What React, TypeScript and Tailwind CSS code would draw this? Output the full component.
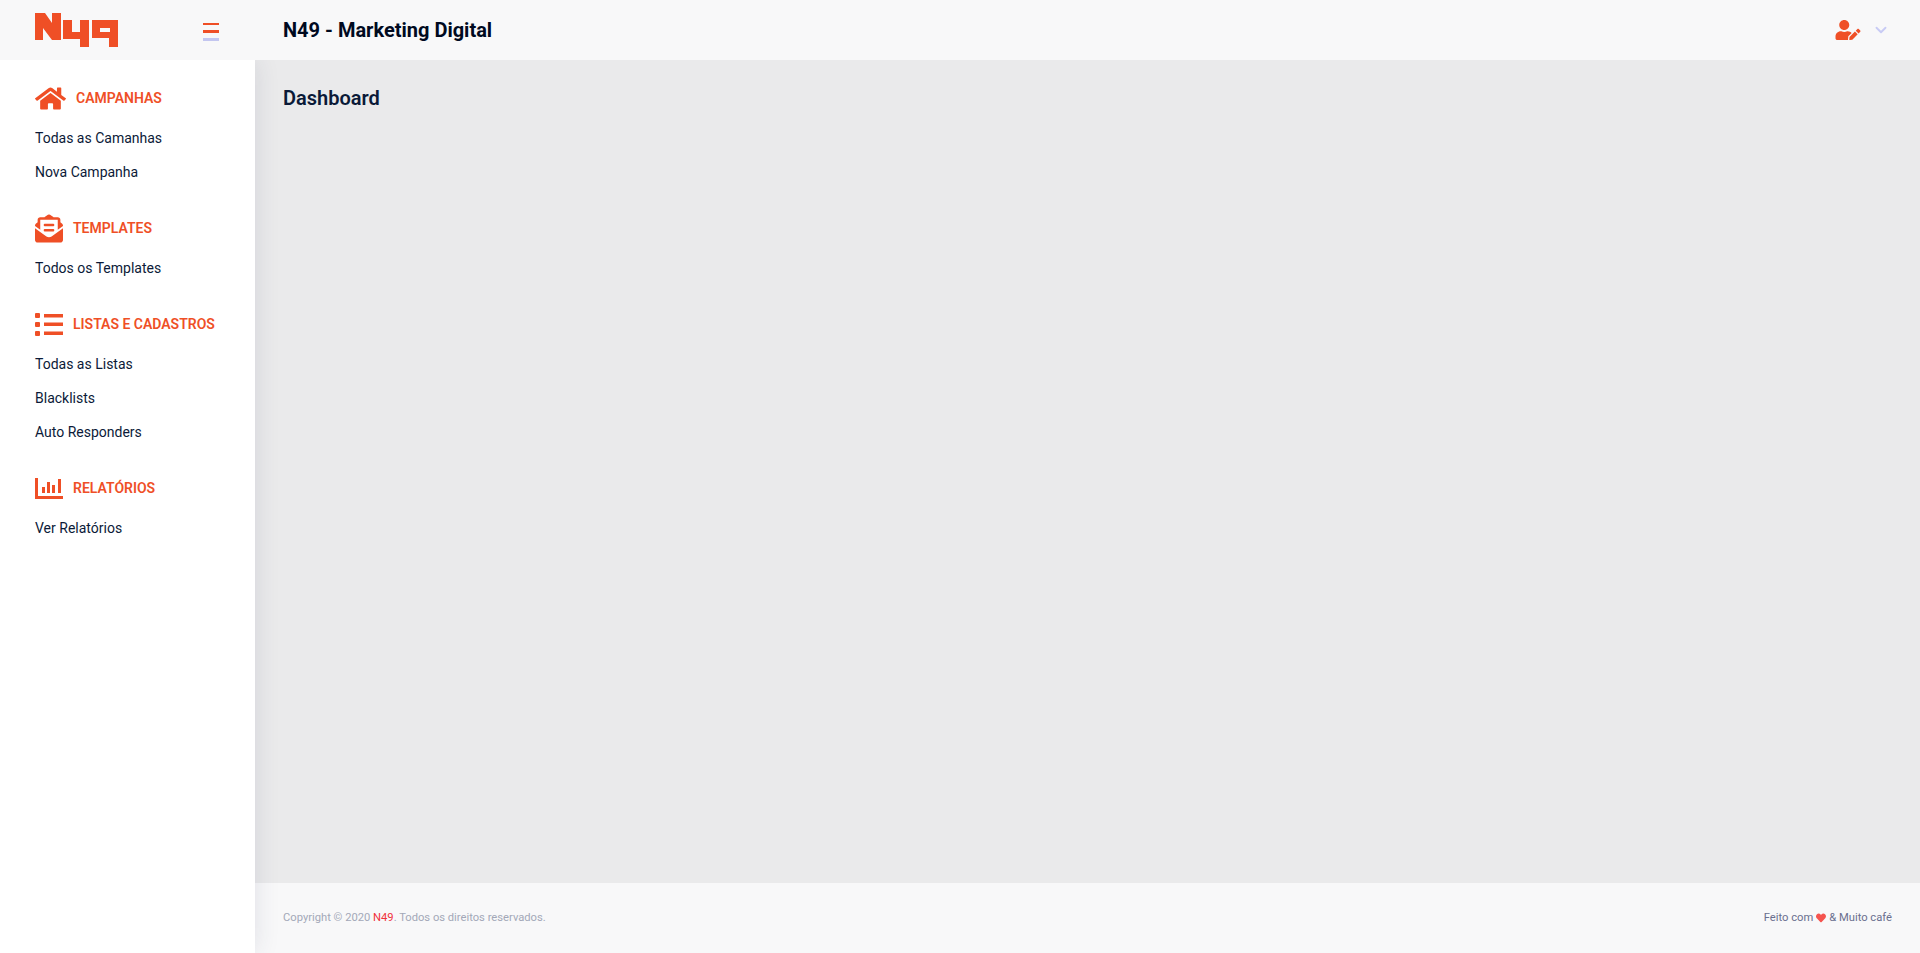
import React from "react";
import { FaHome, FaEnvelopeOpenText, FaUserEdit, FaHeart } from "react-icons/fa";
import { ChevronDown } from "lucide-react";

function Logo() {
  return (
    <svg width="84" height="35" viewBox="0 0 84 35" className="block" aria-label="N49">
      <path
        fill="#ef4f26"
        fillRule="evenodd"
        d="M0 0H10L17 10V0H26V27H17L8 15V27H0Z M28 7H37V19H45V7H54V34H45V26H28Z M57 7H83V34H74V25H57Z M65 15V19H75V15Z"
      />
    </svg>
  );
}

function ChartIcon() {
  return (
    <svg width="28" height="21" viewBox="0 0 28 21" fill="#ef4f26" className="block">
      <rect x="0" y="0" width="3" height="21" />
      <rect x="0" y="18" width="28" height="3" />
      <rect x="7" y="9" width="3" height="6" />
      <rect x="12" y="4" width="3" height="11" />
      <rect x="17" y="7" width="3" height="8" />
      <rect x="23" y="1" width="3" height="14" />
    </svg>
  );
}

function ListIcon() {
  return (
    <svg width="28" height="23" viewBox="0 0 28 23" fill="#ef4f26" className="block">
      <rect x="0" y="0" width="5" height="5" rx="1" />
      <rect x="9" y="1" width="19" height="3.5" />
      <rect x="0" y="9" width="5" height="5" rx="1" />
      <rect x="9" y="9.5" width="19" height="3.5" />
      <rect x="0" y="18" width="5" height="5" rx="1" />
      <rect x="9" y="18.5" width="19" height="3.5" />
    </svg>
  );
}

function Section({ icon, title, items, last }: { icon: React.ReactNode; title: string; items: string[]; last?: boolean }) {
  return (
    <div className={last ? "" : "mb-[22px]"}>
      <div className="flex h-[34px] items-center gap-[10px]">
        {icon}
        <span className="text-[14px] font-semibold uppercase text-[#ef4f26]">{title}</span>
      </div>
      <ul className="mt-[6px]">
        {items.map((i) => (
          <li key={i} className="flex h-[34px] items-center text-[14px] text-[#0b1a38]">
            {i}
          </li>
        ))}
      </ul>
    </div>
  );
}

export default function App() {
  return (
    <div className="flex h-[953px] flex-col overflow-hidden bg-[#eaeaeb] font-['Roboto',sans-serif]">
      <header className="relative z-20 flex h-[60px] shrink-0 items-center bg-[#f8f8f9]">
        <div className="flex w-[255px] shrink-0 items-center justify-between pl-[35px] pr-[36px]">
          <Logo />
          <div className="flex w-4 flex-col gap-[5px] pt-[3px]">
            <span className="h-[2px] bg-[#ef4f26]" />
            <span className="h-[3px] bg-[#ef4f26]" />
            <span className="h-[3px] bg-[#c3c6f0]" />
          </div>
        </div>
        <div className="flex flex-1 items-center justify-between pl-[28px] pr-[30px]">
          <h1 className="text-[20px] font-bold text-[#000a1f]">N49 - Marketing Digital</h1>
          <div className="flex items-center gap-[11px]">
            <FaUserEdit className="h-[20px] w-[26px] text-[#ef4f26]" />
            <ChevronDown className="h-[18px] w-[18px] text-[#c8cbf5]" strokeWidth={2.5} />
          </div>
        </div>
      </header>
      <div className="flex min-h-0 flex-1">
        <aside className="relative z-10 w-[255px] shrink-0 bg-white pl-[35px] pt-[21px] shadow-[0_0_24px_rgba(40,50,90,0.12)]">
          <Section
            icon={<FaHome preserveAspectRatio="none" className="h-[25px] w-[31px] text-[#ef4f26]" />}
            title="Campanhas"
            items={["Todas as Camanhas", "Nova Campanha"]}
          />
          <Section icon={<FaEnvelopeOpenText className="h-[29px] w-[28px] text-[#ef4f26]" />} title="Templates" items={["Todos os Templates"]} />
          <Section icon={<ListIcon />} title="Listas e Cadastros" items={["Todas as Listas", "Blacklists", "Auto Responders"]} />
          <Section icon={<ChartIcon />} title="Relatórios" items={["Ver Relatórios"]} last />
        </aside>
        <div className="flex min-w-0 flex-1 flex-col">
          <main className="flex-1 pl-[28px] pt-[24px]">
            <h2 className="text-[20px] font-semibold leading-[28px] text-[#0b1a38]">Dashboard</h2>
          </main>
          <footer className="flex h-[70px] shrink-0 items-center justify-between bg-[#f8f8f9] pl-[28px] pr-[28px] pt-[1px] text-[11.2px]">
            <span className="text-[#a3a8b8]">
              Copyright © 2020 <span className="text-[#f0323c]">N49</span>. Todos os direitos reservados.
            </span>
            <span className="flex items-center gap-[3px] text-[#6a6f8f]">
              Feito com <FaHeart className="h-[10px] w-[10px] text-[#f5544f]" /> &amp; Muito café
            </span>
          </footer>
        </div>
      </div>
    </div>
  );
}
